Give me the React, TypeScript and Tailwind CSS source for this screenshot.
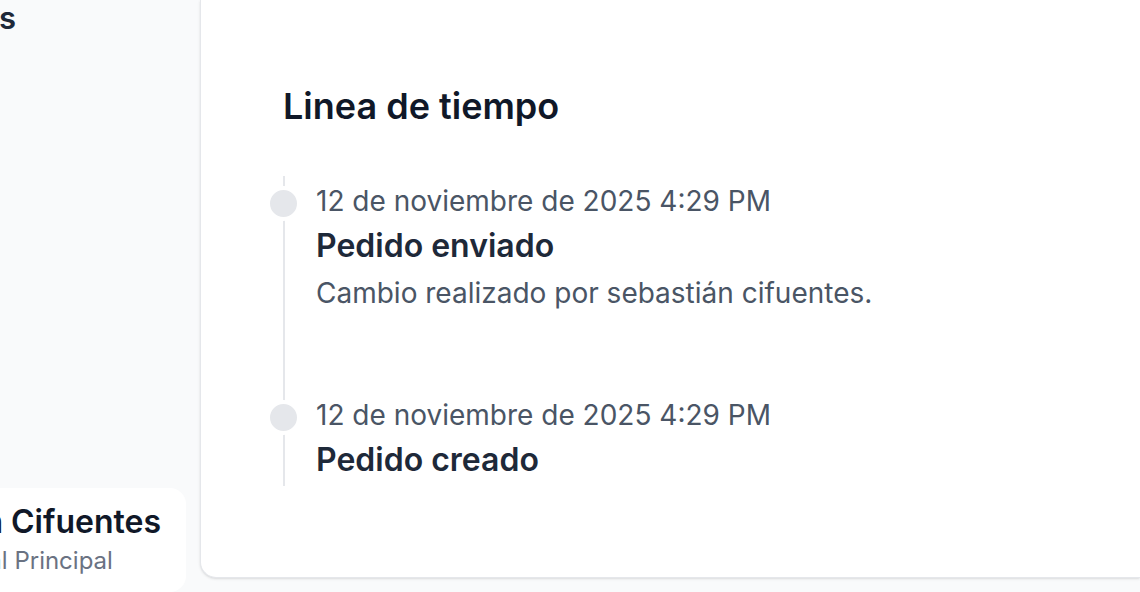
import React from 'react'

const events = [
    {
        date: '12 de noviembre de 2025 4:29 PM',
        title: 'Pedido enviado',
        note: 'Cambio realizado por sebastián cifuentes.',
    },
    {
        date: '12 de noviembre de 2025 4:29 PM',
        title: 'Pedido creado',
        note: '',
    },
]

const App = () => {
    return (
        <div className="w-[1140px] h-[592px] flex bg-gray-50 overflow-hidden" style={{ fontFamily: 'Inter, "Noto Sans", sans-serif' }}>
            {/* sidebar, cut on the left */}
            <aside className="w-[200px] shrink-0 flex flex-col justify-between overflow-hidden">
                <div className="flex justify-end pr-[184px]">
                    <span className="whitespace-nowrap text-[31px] leading-[36px] font-semibold text-gray-800">Pedidos</span>
                </div>
                <div className="flex justify-end pr-[14px]">
                    <div className="w-full h-[104px] bg-white rounded-r-2xl flex justify-end items-start pt-[17px] pr-[25px]">
                        <div className="shrink-0 whitespace-nowrap flex flex-col">
                            <span className="text-[32px] leading-[34px] font-semibold text-gray-900">Sebastián Cifuentes</span>
                            <span className="mt-[6px] text-[24px] leading-[32px] text-gray-500">Gerente Local Principal</span>
                        </div>
                    </div>
                </div>
            </aside>

            {/* main card */}
            <main className="flex-1 flex flex-col pb-[14px]">
                <div className="flex-1 bg-white border-l border-b border-gray-200 rounded-bl-2xl shadow-sm pl-[82px] pt-[84px]">
                    <h2 className="text-[36px] leading-[44px] font-semibold text-gray-900">Linea de tiempo</h2>
                    <ol className="mt-[48px] border-l-2 border-gray-200 w-fit">
                        {events.map((e, i) => (
                            <li key={i} className={`relative pl-[31px] pt-[6px] ${i === 0 ? 'pb-[78px]' : 'pb-[6px]'}`}>
                                <span className="absolute -left-[19px] top-[10px] w-[35px] h-[35px] rounded-full bg-gray-200 border-4 border-white" />
                                <p className="text-[28px] leading-[38px] text-gray-600">{e.date}</p>
                                <p className="mt-[6px] text-[32px] leading-[40px] font-semibold text-gray-800">{e.title}</p>
                                {e.note && <p className="mt-[8px] text-[28px] leading-[38px] text-gray-600">{e.note}</p>}
                            </li>
                        ))}
                    </ol>
                </div>
            </main>
        </div>
    )
}

export default App
